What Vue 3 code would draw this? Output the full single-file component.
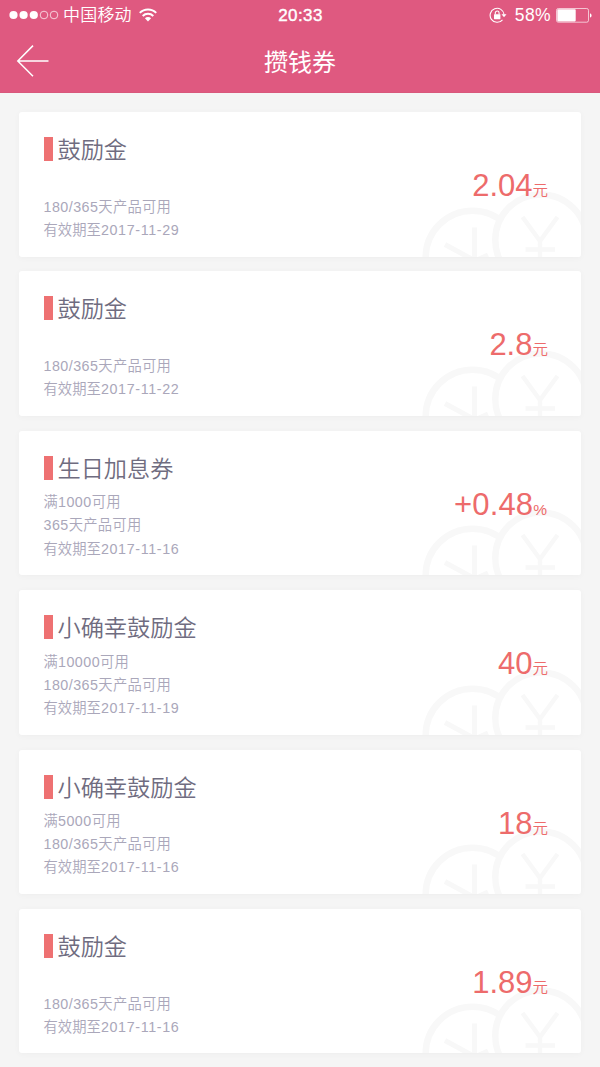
<script setup>
const coupons = [
  { title: '鼓励金', lines: ['180/365天产品可用', '有效期至2017-11-29'], amount: '2.04', unit: '元' },
  { title: '鼓励金', lines: ['180/365天产品可用', '有效期至2017-11-22'], amount: '2.8', unit: '元' },
  { title: '生日加息券', lines: ['满1000可用', '365天产品可用', '有效期至2017-11-16'], amount: '+0.48', unit: '%' },
  { title: '小确幸鼓励金', lines: ['满10000可用', '180/365天产品可用', '有效期至2017-11-19'], amount: '40', unit: '元' },
  { title: '小确幸鼓励金', lines: ['满5000可用', '180/365天产品可用', '有效期至2017-11-16'], amount: '18', unit: '元' },
  { title: '鼓励金', lines: ['180/365天产品可用', '有效期至2017-11-16'], amount: '1.89', unit: '元' },
]

// Separates digits from Chinese text so each can carry its own tracking.
const runs = (line) => line.match(/[\d/-]+|[^\d/-]+/g)
const isNumeric = (run) => /^\d/.test(run)
</script>

<template>
  <div class="screen">
    <header class="header">
      <div class="status">
        <div class="carrier">
          <svg class="dots" width="50" height="10" viewBox="0 0 50 10">
            <g fill="#fff"><circle cx="4.5" cy="5" r="4.1" /><circle cx="14.6" cy="5" r="4.1" /><circle cx="24.8" cy="5" r="4.1" /></g>
            <g fill="none" stroke="#fff" stroke-width=".7"><circle cx="35" cy="5" r="3.8" /><circle cx="45" cy="5" r="3.8" /></g>
          </svg>
          <span class="carrier-name">中国移动</span>
          <svg class="wifi" width="18" height="14" viewBox="0 0 18 14">
            <g fill="none" stroke="#fff" stroke-width="2">
              <path d="M.8 4.9a11.6 11.6 0 0 1 16.4 0" />
              <path d="M3.7 8a7.5 7.5 0 0 1 10.6 0" />
            </g>
            <path d="M9 13.4 5.9 10.2a4.4 4.4 0 0 1 6.2 0Z" fill="#fff" />
          </svg>
        </div>
        <span class="clock">20:33</span>
        <div class="power">
          <svg width="18" height="16" viewBox="0 0 18 16">
            <path d="M13.5 12.8A7 7 0 1 1 15.1 7.600" fill="none" stroke="#fff" stroke-width="1.1" />
            <path d="M12.500 7.300h5l-2.500 3z" fill="#fff" />
            <rect x="5" y="7.2" width="6.400" height="5" rx=".4" fill="#fff" />
            <path d="M6.300 7.400V5.900a1.900 1.900 0 0 1 3.800 0V7.400" fill="none" stroke="#fff" stroke-width="1.1" />
          </svg>
          <span class="percent">58%</span>
          <svg width="36" height="15" viewBox="0 0 36 15">
            <rect x=".5" y=".5" width="32" height="13.700" rx="1.8" fill="none" stroke="#fff" stroke-opacity=".65" />
            <rect x="1.3" y="1.3" width="18.400" height="12.1" rx=".8" fill="#fff" />
            <path d="M34 5.2c2.1.8 2.1 3.600 0 4.400z" fill="#fff" />
          </svg>
        </div>
      </div>
      <div class="nav">
        <svg class="back" width="34" height="34" viewBox="0 0 34 34">
          <path d="M17 1.600 1.800 17 17 32.200M1.800 17H32.500" fill="none" stroke="#fff" stroke-width="1.500" />
        </svg>
        <h1>攒钱券</h1>
      </div>
    </header>

    <main class="list">
      <section v-for="(c, i) in coupons" :key="i" class="card">
        <svg class="coins" width="164" height="70" viewBox="0 0 164 70" fill="none" stroke="#f8f8f8">
          <circle cx="55.500" cy="70.500" r="46.800" stroke-width="6.500" />
          <path d="M28 57.500 57.500 73.500V40.500M60 73 71 68" stroke-width="5" />
          <circle cx="123.900" cy="53" r="45.600" stroke-width="6.500" fill="#fff" />
          <path d="M105.500 30 123 54 140.500 30M123 53V70M108.500 62.500H138" stroke-width="4.500" />
        </svg>
        <div class="info">
          <h2>{{ c.title }}</h2>
          <div class="conditions">
            <p v-for="line in c.lines" :key="line" :class="{ expiry: line.startsWith('有效期') }"><span v-for="(run, r) in runs(line)" :key="r" :class="{ digits: isNumeric(run) }">{{ run }}</span></p>
          </div>
        </div>
        <div class="amount" :class="{ rate: c.unit === '%' }"><span class="value">{{ c.amount }}</span><span class="unit">{{ c.unit }}</span></div>
      </section>
    </main>
  </div>
</template>

<style>
body { background: #f5f5f5; overflow: hidden; }
</style>

<style scoped>
.screen {
  width: 600px;
  height: 1067px;
  overflow: hidden;
  background: #f5f5f5;
  font-family: "Liberation Sans", "Noto Sans CJK SC DemiLight", "Noto Sans CJK SC Light", "Noto Sans CJK SC", sans-serif;
  font-weight: 300;
}
.header { height: 93px; box-sizing: border-box; background: #df5980; border-bottom: 1px solid #d9587c; color: #fff; }
.status { height: 30px; display: grid; grid-template-columns: 1fr auto 1fr; align-items: center; padding: 0 8px 0 9px; }
.carrier { display: flex; align-items: center; }
.carrier-name { margin-left: 4px; padding-top: 2px; font-size: 17px; line-height: 28px; letter-spacing: .2px; }
.wifi { margin-left: 7px; }
.clock { padding-top: 2px; font-size: 17px; font-weight: 400; -webkit-text-stroke: .4px #fff; letter-spacing: .4px; }
.power { display: flex; align-items: center; justify-content: flex-end; }
.percent { margin: 1px 5px 0 8px; font-size: 17.500px; letter-spacing: .4px; }
.nav { position: relative; height: 62px; display: flex; align-items: center; justify-content: center; }
.back { position: absolute; left: 16px; top: 14px; }
h1 { margin: 0; font-size: 24px; line-height: 36px; font-weight: 400; font-family: "Noto Sans CJK SC", sans-serif; }
.list { display: flex; flex-direction: column; gap: 14.900px; padding: 19px 19px 0; }
.card {
  position: relative;
  flex: none;
  height: 144.500px;
  box-sizing: border-box;
  display: flex;
  justify-content: space-between;
  padding: 25px 33px 0 24.500px;
  overflow: hidden;
  border-radius: 3px;
  background: #fff;
  box-shadow: 0 1px 6px rgba(0, 0, 0, .035);
}
.coins { position: absolute; right: 0; bottom: 0; }
.info { position: relative; height: 105px; display: flex; flex-direction: column; justify-content: space-between; }
h2 {
  margin: 0;
  height: 24px;
  padding-left: 5px;
  border-left: 9px solid #ee7172;
  font-size: 23.200px;
  line-height: 26px;
  font-weight: 300;
  color: #6f6c80;
  white-space: nowrap;
}
.conditions { color: #aaa7ba; font-size: 14.300px; letter-spacing: .25px; }
p { margin: 0; height: 23.200px; line-height: 23.200px; white-space: nowrap; }
.digits { letter-spacing: .45px; }
.expiry { letter-spacing: .05px; }
.expiry .digits { letter-spacing: .65px; }
.amount { position: relative; display: flex; align-items: baseline; height: 36px; margin-top: 31px; color: #ed6b6b; line-height: 36px; }
.value { font-size: 31px; }
.unit { font-size: 15.500px; }
.rate .value { letter-spacing: .15px; }
.rate .unit { margin-right: 1px; }
</style>
